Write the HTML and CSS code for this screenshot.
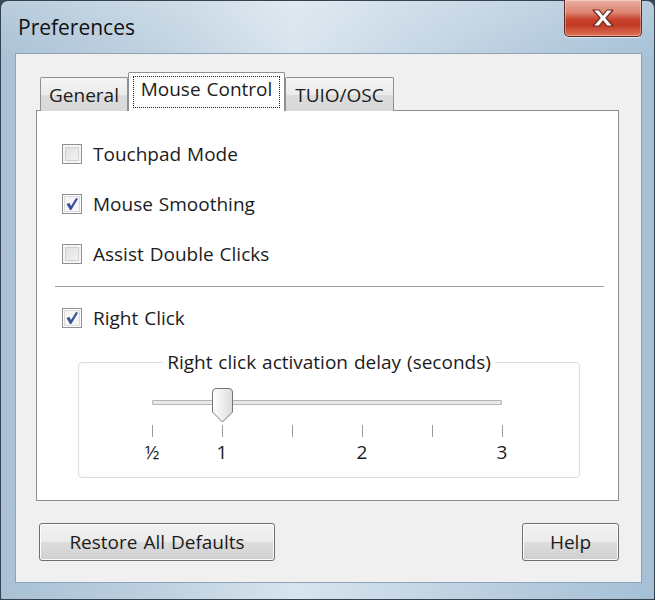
FILE: index.html
```html
<!DOCTYPE html>
<html>
<head>
<meta charset="utf-8">
<link rel="stylesheet" href="styles.css">
</head>
<body>
<div class="window">
  <div class="titlebar">
    <div class="title">Preferences</div>
    <div class="close">
      <svg width="26" height="20" viewBox="0 0 26 20"><path d="M3 2 H9 L13 7 L17 2 H23 L16 10 L23 18 H17 L13 13 L9 18 H3 L10 10 Z" fill="#fff" stroke="#6a2a20" stroke-width="1.2" stroke-linejoin="round"/></svg>
    </div>
  </div>
  <div class="client">
    <div class="tabs">
      <div class="tab t-general">General</div>
      <div class="tab selected"><span class="focus">Mouse Control</span></div>
      <div class="tab t-tuio">TUIO/OSC</div>
    </div>
    <div class="panel">
      <div class="row"><span class="cb"></span><span>Touchpad Mode</span></div>
      <div class="row"><span class="cb checked"><svg width="18" height="18" viewBox="0 0 18 18"><path d="M3.5 9 L6.5 8 L8 11 L13 3 L15 3.8 L8.3 15 H7 Z" fill="#3a4f9c"/></svg></span><span>Mouse Smoothing</span></div>
      <div class="row"><span class="cb"></span><span>Assist Double Clicks</span></div>
      <div class="sep"></div>
      <div class="row"><span class="cb checked"><svg width="18" height="18" viewBox="0 0 18 18"><path d="M3.5 9 L6.5 8 L8 11 L13 3 L15 3.8 L8.3 15 H7 Z" fill="#3a4f9c"/></svg></span><span>Right Click</span></div>
      <fieldset class="group">
        <legend>Right click activation delay (seconds)</legend>
        <div class="slider">
          <div class="trackarea">
            <div class="track"></div>
            <svg class="thumb" style="left:20%" width="21" height="35" viewBox="0 0 21 35">
              <defs><linearGradient id="tg" x1="0" y1="0" x2="1" y2="0"><stop offset="0" stop-color="#ffffff"/><stop offset="1" stop-color="#dcdcdc"/></linearGradient></defs>
              <path d="M4 0.5 H17 Q20.5 0.5 20.5 4 V24 L10.5 34 L0.5 24 V4 Q0.5 0.5 4 0.5 Z" fill="url(#tg)" stroke="#767676"/>
            </svg>
          </div>
          <div class="ticks">
            <i style="left:0%"></i><i style="left:20%"></i><i style="left:40%"></i><i style="left:60%"></i><i style="left:80%"></i><i style="left:100%"></i>
          </div>
          <div class="labels">
            <span style="left:0%">½</span><span style="left:20%">1</span><span style="left:60%">2</span><span style="left:100%">3</span>
          </div>
        </div>
      </fieldset>
    </div>
    <div class="buttons">
      <div class="btn restore">Restore All Defaults</div>
      <div class="btn help">Help</div>
    </div>
  </div>
</div>
</body>
</html>
```
FILE: styles.css
```css
* { box-sizing: border-box; }
html, body { margin: 0; padding: 0; }
body {
  width: 655px; height: 600px; overflow: hidden;
  font-family: "Open Sans", "Noto Sans", sans-serif;
  font-size: 19px; word-spacing: 1px; color: #1c1c1c;
  background: #3a4652;
}
.window {
  width: 655px; height: 600px;
  border: 1px solid #36424e;
  border-radius: 8px 8px 2px 2px;
  background:
    linear-gradient(180deg, rgba(255,255,255,0.2) 0%, rgba(255,255,255,0) 10%),
    linear-gradient(90deg, #a9c1d5 0%, #bfd1e0 25%, #d8e4ee 45%, #c9d9e7 60%, #b6cbdd 80%, #a5c0d6 100%);
  padding: 0 12px 16px 14px;
  display: flex; flex-direction: column;
}
.titlebar { height: 52px; display: flex; align-items: flex-start; }
.title { font-size: 21px; margin: 12px 0 0 3px; color: #111; }
.close {
  margin-left: auto; margin-top: -1px;
  width: 78px; height: 37px;
  border: 1px solid #5a2a22; border-top: none;
  border-radius: 0 0 5px 5px;
  background: linear-gradient(180deg, #e9b1a3 0%, #dc8370 35%, #c6402a 55%, #c23a24 70%, #dc7257 100%);
  box-shadow: inset 0 0 0 1px rgba(255,255,255,0.35), 0 1px 1px rgba(255,255,255,0.6);
  display: flex; align-items: center; justify-content: center;
}
.client {
  flex: 1;
  background: #f0f0f0;
  border: 1px solid #8fa3b6;
  display: flex; flex-direction: column;
  padding: 18px 22px 0 20px;
}
.tabs { display: flex; align-items: flex-end; padding-left: 4px; margin-bottom: -1px; position: relative; z-index: 1; }
.tab {
  height: 34px;
  border: 1px solid #8c8e94; border-bottom: none;
  background: linear-gradient(180deg, #f4f4f4 0%, #ebebeb 50%, #dcdcdc 51%, #d8d8d8 100%);
  padding-top: 3px;
  border-radius: 2px 2px 0 0;
  line-height: 28px;
  text-align: center;
}
.t-general { width: 88px; }
.t-tuio { width: 109px; }
.tab.selected {
  width: 157px;
  height: 39px;
  background: #fff;
  padding: 3px 4px 2px 4px;
  line-height: 27px;
  position: relative; z-index: 2;
}
.focus { display: block; height: 32px; outline: 1px dotted #222; outline-offset: -1px; }
.panel {
  height: 391px;
  background: #fff;
  border: 1px solid #8c8e94;
  padding: 18px 14px 0 18px;
}
.row { height: 50px; display: flex; align-items: center; margin-left: 7px; }
.cb {
  width: 20px; height: 20px; flex: none;
  border: 1px solid #8e8f8f;
  background: linear-gradient(135deg, #dcdcdc 0%, #f6f6f6 100%);
  box-shadow: inset 0 0 0 2px #f4f4f4, inset 0 0 0 3px #d2d2d2;
  margin-right: 11px;
  display: flex; align-items: center; justify-content: center;
}
.cb.checked { background: #f6f6f6; box-shadow: inset 0 0 0 1px #fff, inset 0 0 0 2px #dadada; }
.sep { height: 2px; border-top: 1px solid #a0a0a0; border-bottom: 1px solid #fff; margin: 7px 0 5px 0; }
.group {
  margin: 7px 24px 0 23px;
  border: 1px solid #d5dfe5;
  border-radius: 4px;
  padding: 0;
  height: 128px;
}
.group legend { margin: 0 auto; padding: 0 4px; line-height: 24px; }
.slider { width: 350px; margin: 14px 0 0 73px; }
.trackarea { position: relative; height: 36px; }
.track {
  position: absolute; left: 0; right: 0; top: 12px; height: 5px;
  border: 1px solid #b5b5b5; border-radius: 1px;
  background: #e8e8e8;
}
.thumb { position: absolute; top: 0; margin-left: -10px; }
.ticks { position: relative; height: 12px; margin-top: 1px; }
.ticks i { position: absolute; top: 0; width: 1px; height: 12px; background: #9a9a9a; }
.labels { position: relative; height: 24px; margin-top: 3px; }
.labels span { position: absolute; top: 0; transform: translateX(-50%); line-height: 24px; }
.buttons { display: flex; justify-content: space-between; padding: 22px 0 0 3px; }
.btn {
  height: 38px;
  border: 1px solid #707070; border-radius: 3px;
  background: linear-gradient(180deg, #f2f2f2 0%, #ebebeb 50%, #dddddd 51%, #cfcfcf 100%);
  box-shadow: inset 0 0 0 1px #fcfcfc;
  display: flex; align-items: center; justify-content: center;
}
.restore { width: 236px; }
.help { width: 97px; }
```
